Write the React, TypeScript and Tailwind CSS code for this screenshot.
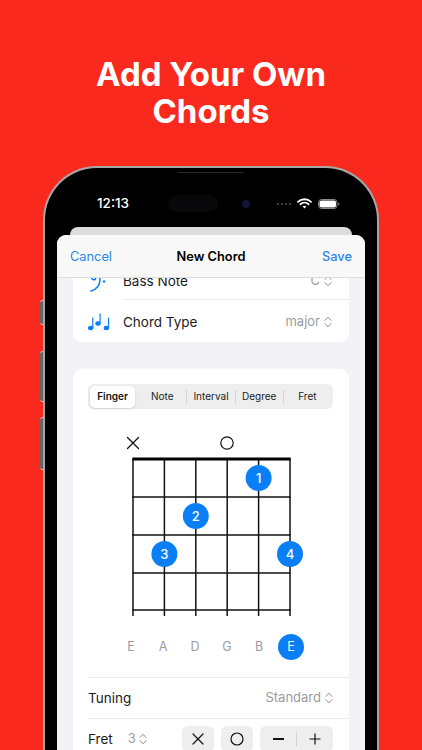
const font = { fontFamily: "Inter, 'Liberation Sans', sans-serif" };

const UpDown = ({ className = "text-[#8e8e93]" }: { className?: string }) => (
  <svg width="8" height="12" viewBox="0 0 8 12" fill="none" className={className}>
    <path d="M1 4.4 4 1.2l3 3.2M1 7.6l3 3.2 3-3.2" stroke="currentColor" strokeWidth="1" strokeLinecap="round" strokeLinejoin="round" />
  </svg>
);

const Wifi = () => (
  <svg width="15" height="11" viewBox="0 0 15 11" fill="none">
    <path d="M1 3.8C4.6.4 10.4.4 14 3.8" stroke="white" strokeWidth="1.8" strokeLinecap="round" />
    <path d="M3.4 6.2c2.3-2 5.9-2 8.2 0" stroke="white" strokeWidth="1.8" strokeLinecap="round" />
    <path d="M5.6 8.3 7.5 10.4 9.4 8.3C8.3 7.4 6.7 7.4 5.6 8.3Z" fill="white" />
  </svg>
);

const Battery = () => (
  <svg width="22" height="10" viewBox="0 0 22 10" fill="none">
    <rect x="0.5" y="0.5" width="18.5" height="9" rx="3" stroke="#8a8a8a" />
    <rect x="1.5" y="1.5" width="16.5" height="7" rx="2" fill="white" />
    <path d="M20.3 3.4c.8.3 1.2.9 1.2 1.6s-.4 1.3-1.2 1.6Z" fill="#8a8a8a" />
  </svg>
);

const BassClef = () => (
  <svg width="18" height="24" viewBox="0 0 18 24" fill="none" className="text-[#0a7ff5]">
    <path d="M1 22c5-1.6 9-5.4 9-11 0-3.4-1.6-5.6-4.4-5.6-2.2 0-3.8 1.4-3.8 3.2 0 1.3.9 2.2 2 2.2s1.9-.8 1.9-1.8" stroke="currentColor" strokeWidth="1.5" strokeLinecap="round" />
    <circle cx="14" cy="7.5" r="1.2" fill="currentColor" />
    <circle cx="14" cy="12.5" r="1.2" fill="currentColor" />
  </svg>
);

const Notes = () => (
  <svg width="22" height="18" viewBox="0 0 22 18" fill="currentColor" className="text-[#0a7ff5]">
    <ellipse cx="2.7" cy="15" rx="2.7" ry="2.2" />
    <path d="M4.2 4.6h1.2V15H4.2z" />
    <ellipse cx="10" cy="10.5" rx="2.7" ry="2.2" />
    <path d="M11.5.6h1.2v10h-1.2z" />
    <ellipse cx="18.4" cy="15" rx="2.7" ry="2.2" />
    <path d="M19.9 4.6h1.2V15h-1.2z" />
  </svg>
);

const Diagram = () => {
  const strings = [0, 31.4, 62.8, 94.2, 125.6, 157];
  const frets = [38, 76, 114, 151];
  const dots = [
    { x: 125.6, y: 19, n: "1" },
    { x: 62.8, y: 57, n: "2" },
    { x: 31.4, y: 95, n: "3" },
    { x: 157, y: 95, n: "4" },
  ];
  return (
    <svg width="185" height="158" viewBox="-14 -1 185 158" className="block overflow-visible" style={font}>
      {strings.map((x) => (
        <line key={x} x1={x} y1="0" x2={x} y2="157" stroke="#111" strokeWidth="1.5" />
      ))}
      <line x1="-0.7" y1="0" x2="157.7" y2="0" stroke="#000" strokeWidth="2.8" />
      {frets.map((y) => (
        <line key={y} x1="-0.7" y1={y} x2="157.7" y2={y} stroke="#111" strokeWidth="1.5" />
      ))}
      {dots.map((d) => (
        <g key={d.n}>
          <circle cx={d.x} cy={d.y} r="13" fill="#0a7ff5" />
          <text x={d.x} y={d.y + 4.6} textAnchor="middle" fontSize="13" fontWeight="500" fill="#fff">
            {d.n}
          </text>
        </g>
      ))}
    </svg>
  );
};

const Row = ({ icon, label, value, box }: { icon: React.ReactNode; label: string; value: string; box: string }) => (
  <div className={`flex items-center ${box}`}>
    <div className="flex w-[50px] justify-center pl-[2px]">{icon}</div>
    <span className="text-[13.5px] text-[#1c1c1e]">{label}</span>
    <span className="ml-auto text-[13px] text-[#9b9ba0]">{value}</span>
    <span className="ml-[4px] mr-[17px]">
      <UpDown />
    </span>
  </div>
);

const App = () => {
  const tabs = ["Finger", "Note", "Interval", "Degree", "Fret"];
  const letters = ["E", "A", "D", "G", "B", "E"];

  return (
    <div className="h-[750px] w-[422px] overflow-hidden bg-[#f9291d]" style={font}>
      <h1 className="pt-[56px] text-center text-[33px] font-bold leading-[37px] text-white">
        Add Your Own
        <br />
        Chords
      </h1>

      <div className="relative ml-[43px] mt-[36px] h-[600px] w-[336px]">
        {/* side buttons */}
        <div className="absolute left-[-3px] top-[134px] h-[25px] w-[3px] rounded-l-sm border-y border-[#d8d8d8] bg-[#666]" />
        <div className="absolute left-[-3px] top-[185px] h-[51px] w-[3px] rounded-l-sm border-y border-[#d8d8d8] bg-[#666]" />
        <div className="absolute left-[-3px] top-[251px] h-[53px] w-[3px] rounded-l-sm border-y border-[#d8d8d8] bg-[#666]" />

        <div className="relative h-full overflow-hidden rounded-t-[54px] border-[2px] border-b-0 border-[#a9a7a5] bg-black px-[12px]">
          {/* speaker + island + camera */}
          <div className="absolute left-[133px] top-[4px] h-[1px] w-[66px] bg-[#2a2a2a]" />
          <div className="absolute left-[123px] top-[27px] h-[17px] w-[50px] rounded-full bg-[#08080a]" />
          <div className="absolute left-[197px] top-[32px] h-[8px] w-[8px] rounded-full bg-[#14143a]" />

          {/* status bar */}
          <div className="flex h-[59px] items-center pl-[40px] pr-[25px] pt-[12px]">
            <span className="text-[13.5px] font-medium text-white">12:13</span>
            <div className="ml-auto flex items-center gap-[6px]">
              <div className="flex gap-[2px]">
                <span className="h-[2px] w-[2px] rounded-full bg-[#555]" />
                <span className="h-[2px] w-[2px] rounded-full bg-[#555]" />
                <span className="h-[2px] w-[2px] rounded-full bg-[#555]" />
                <span className="h-[2px] w-[2px] rounded-full bg-[#555]" />
              </div>
              <Wifi />
              <Battery />
            </div>
          </div>

          <div className="mx-[13px] h-[8px] rounded-t-[8px] bg-[#dcdcdc]" />

          {/* sheet */}
          <div className="h-[600px] rounded-t-[9px] bg-[#f2f2f7]">
            <div className="relative z-10 grid h-[43px] grid-cols-3 items-center rounded-t-[9px] border-b border-[#dededf] bg-[#f8f8f8] px-[13px] pt-[2px] text-[12.8px]">
              <span className="text-[#2a86ea]">Cancel</span>
              <span className="whitespace-nowrap text-center font-semibold text-black">New Chord</span>
              <span className="text-right font-medium text-[#2a86ea]">Save</span>
            </div>

            <div className="px-[16px]">
              <div className="-mt-[19px] rounded-b-[9px] bg-white">
                <Row icon={<BassClef />} label="Bass Note" value="C" box="h-[40px] pt-[4px]" />
                <div className="ml-[50px] h-px bg-[#ececee]" />
                <Row icon={<Notes />} label="Chord Type" value="major" box="h-[42px] pt-[2px]" />
              </div>

              <div className="mt-[27px] rounded-[9px] bg-white pl-[15px] pt-[15px]">
                <div className="mr-[16px] flex h-[25px] items-center rounded-[6px] bg-[#eeeeef] px-[2px]">
                  {tabs.map((t, i) => (
                    <div key={t} className="flex flex-1 items-center">
                      {i > 1 && <span className="h-[14px] w-px bg-[#d4d4d8]" />}
                      <span
                        className={
                          i === 0
                            ? "mr-[3px] flex h-[22px] flex-1 items-center justify-center rounded-[5px] bg-white text-[10px] font-semibold text-[#111] shadow-sm"
                            : "flex h-[22px] flex-1 items-center justify-center text-[10px] text-[#222]"
                        }
                      >
                        {t}
                      </span>
                    </div>
                  ))}
                </div>

                <div className="ml-[30px] mt-[27px] flex h-[14px] items-center">
                  <svg width="14" height="14" viewBox="0 0 14 14" className="ml-[8px]">
                    <path d="M1.5 1.5l11 11M12.5 1.5l-11 11" stroke="#111" strokeWidth="1.3" strokeLinecap="round" />
                  </svg>
                  <svg width="14" height="14" viewBox="0 0 14 14" className="ml-[80px]">
                    <circle cx="7" cy="7" r="6.2" fill="none" stroke="#111" strokeWidth="1.2" />
                  </svg>
                </div>

                <div className="ml-[31px] mt-[8px]">
                  <Diagram />
                </div>

                <div className="ml-[27px] mt-[18px] grid w-[192px] grid-cols-6 justify-items-center">
                  {letters.map((l, i) => (
                    <span
                      key={i}
                      className={
                        i === 5
                          ? "flex h-[26px] w-[26px] items-center justify-center rounded-full bg-[#0a7ff5] text-[12.5px] text-white"
                          : "flex h-[26px] w-[26px] items-center justify-center text-[12.5px] text-[#9b9ba0]"
                      }
                    >
                      {l}
                    </span>
                  ))}
                </div>

                <div className="mt-[17px] h-px bg-[#ececee]" />

                <div className="flex h-[40px] items-center">
                  <span className="text-[13.5px] text-[#1c1c1e]">Tuning</span>
                  <span className="ml-auto text-[13px] text-[#9b9ba0]">Standard</span>
                  <span className="ml-[4px] mr-[16px]">
                    <UpDown />
                  </span>
                </div>

                <div className="h-px bg-[#ececee]" />

                <div className="flex items-center pt-[7px]">
                  <span className="text-[13.5px] text-[#1c1c1e]">Fret</span>
                  <span className="ml-[15px] text-[13px] text-[#9b9ba0]">3</span>
                  <span className="ml-[3px]">
                    <UpDown />
                  </span>
                  <div className="ml-auto mr-[16px] flex gap-[7px]">
                    <div className="flex h-[26px] w-[32px] items-center justify-center rounded-[6px] bg-[#eeeeef]">
                      <svg width="12" height="12" viewBox="0 0 12 12">
                        <path d="M1 1l10 10M11 1 1 11" stroke="#111" strokeWidth="1.2" strokeLinecap="round" />
                      </svg>
                    </div>
                    <div className="flex h-[26px] w-[32px] items-center justify-center rounded-[6px] bg-[#eeeeef]">
                      <svg width="14" height="14" viewBox="0 0 14 14">
                        <circle cx="7" cy="7" r="6" fill="none" stroke="#111" strokeWidth="1.2" />
                      </svg>
                    </div>
                    <div className="flex h-[26px] w-[73px] items-center rounded-[6px] bg-[#eeeeef]">
                      <div className="flex flex-1 justify-center">
                        <span className="h-[1.3px] w-[11px] bg-[#111]" />
                      </div>
                      <span className="h-[14px] w-px bg-[#d4d4d8]" />
                      <div className="flex flex-1 justify-center">
                        <svg width="12" height="12" viewBox="0 0 12 12">
                          <path d="M6 .5v11M.5 6h11" stroke="#111" strokeWidth="1.2" />
                        </svg>
                      </div>
                    </div>
                  </div>
                </div>
                <div className="h-[30px]" />
              </div>
            </div>
          </div>
        </div>
      </div>
    </div>
  );
};

export default App;
